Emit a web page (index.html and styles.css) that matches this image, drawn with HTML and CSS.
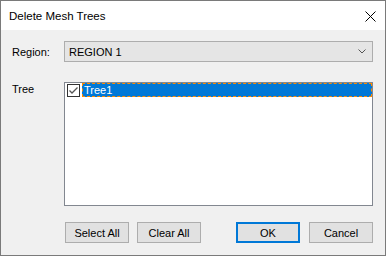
FILE: index.html
```html
<!DOCTYPE html>
<html lang="en">
<head>
    <meta charset="UTF-8">
    <meta name="viewport" content="width=device-width, initial-scale=1.0">
    <link rel="stylesheet" href="styles.css">
</head>
<body>
    <div class="dialog">
        <div class="titlebar">
            <span class="title">Delete Mesh Trees</span>
            <svg class="close" width="11" height="11" viewBox="0 0 11 11">
                <path d="M0.5 0.5 L10.5 10.5 M10.5 0.5 L0.5 10.5" stroke="#000" stroke-width="1" fill="none"/>
            </svg>
        </div>

        <div class="client">
            <div class="field region-field">
                <label class="field-label">Region:</label>
                <div class="combo">
                    <span class="combo-text">REGION 1</span>
                    <svg class="chevron" width="8" height="5" viewBox="0 0 8 5">
                        <path d="M0.5 0.5 L4 4 L7.5 0.5" stroke="#555" stroke-width="1" fill="none"/>
                    </svg>
                </div>
            </div>

            <div class="field tree-field">
                <label class="field-label">Tree</label>
                <div class="listbox">
                    <div class="list-item">
                        <span class="check">
                            <svg width="11" height="11" viewBox="0 0 11 11">
                                <path d="M1.5 5.5 L4 8 L9.5 2.5" stroke="#555" stroke-width="1.3" fill="none"/>
                            </svg>
                        </span>
                        <span class="item-text selected">Tree1</span>
                    </div>
                </div>
            </div>

            <div class="buttons">
                <div class="button-group">
                    <button class="btn first">Select All</button>
                    <button class="btn">Clear All</button>
                </div>
                <div class="button-group wide-gap">
                    <button class="btn default">OK</button>
                    <button class="btn">Cancel</button>
                </div>
            </div>
        </div>
    </div>
</body>
</html>
```

FILE: styles.css
```css
* {
    box-sizing: border-box;
}

body {
    margin: 0;
    font-family: "Liberation Sans", Arial, sans-serif;
    font-size: 11px;
    color: #000;
    background-color: #f0f0f0;
}

.dialog {
    width: 386px;
    height: 256px;
    border: 1px solid #7a7a7a;
    display: flex;
    flex-direction: column;
    background-color: #f0f0f0;
}

.titlebar {
    height: 29px;
    background-color: #fff;
    display: flex;
    align-items: center;
    justify-content: space-between;
    padding: 1px 9px 0 8px;
}

.title {
    font-size: 11.5px;
}

.close {
    display: block;
}

.client {
    flex: 1;
    display: flex;
    flex-direction: column;
    padding: 11px 12px 12px 11px;
}

.field {
    display: grid;
    grid-template-columns: 52px 309px;
}

.region-field {
    align-items: center;
}

.tree-field {
    margin-top: 20px;
}

.tree-field .field-label {
    padding-top: 1px;
}

.combo {
    height: 21px;
    border: 1px solid #adadad;
    background-color: #e5e5e5;
    display: flex;
    align-items: center;
    justify-content: space-between;
    padding: 0 6px 0 4px;
}

.combo-text {
    padding-top: 1px;
}

.chevron {
    display: block;
}

.listbox {
    height: 124px;
    border: 1px solid #828790;
    background-color: #fff;
    padding: 0 0 0 1px;
}

.list-item {
    display: flex;
    align-items: center;
    height: 14px;
}

.check {
    width: 13px;
    height: 13px;
    border: 1px solid #333;
    background-color: #fff;
    display: flex;
    align-items: center;
    justify-content: center;
    margin: 1px 2px 0 1px;
}

.check svg {
    display: block;
}

.item-text {
    flex: 1;
    height: 14px;
    line-height: 12px;
    padding-left: 1px;
}

.item-text.selected {
    background-color: #0078d7;
    color: #fff;
    border: 1px dashed #ff8c00;
}

.buttons {
    margin-top: 16px;
    display: flex;
    justify-content: space-between;
    padding-left: 53px;
}

.button-group {
    display: flex;
    gap: 8px;
}

.button-group.wide-gap {
    gap: 9px;
}

.btn {
    width: 64px;
    height: 21px;
    padding: 0;
    font-family: "Liberation Sans", Arial, sans-serif;
    font-size: 11px;
    color: #000;
    background-color: #e1e1e1;
    border: 1px solid #adadad;
    border-radius: 0;
}

.btn.default {
    border: 2px solid #0078d7;
}
```
